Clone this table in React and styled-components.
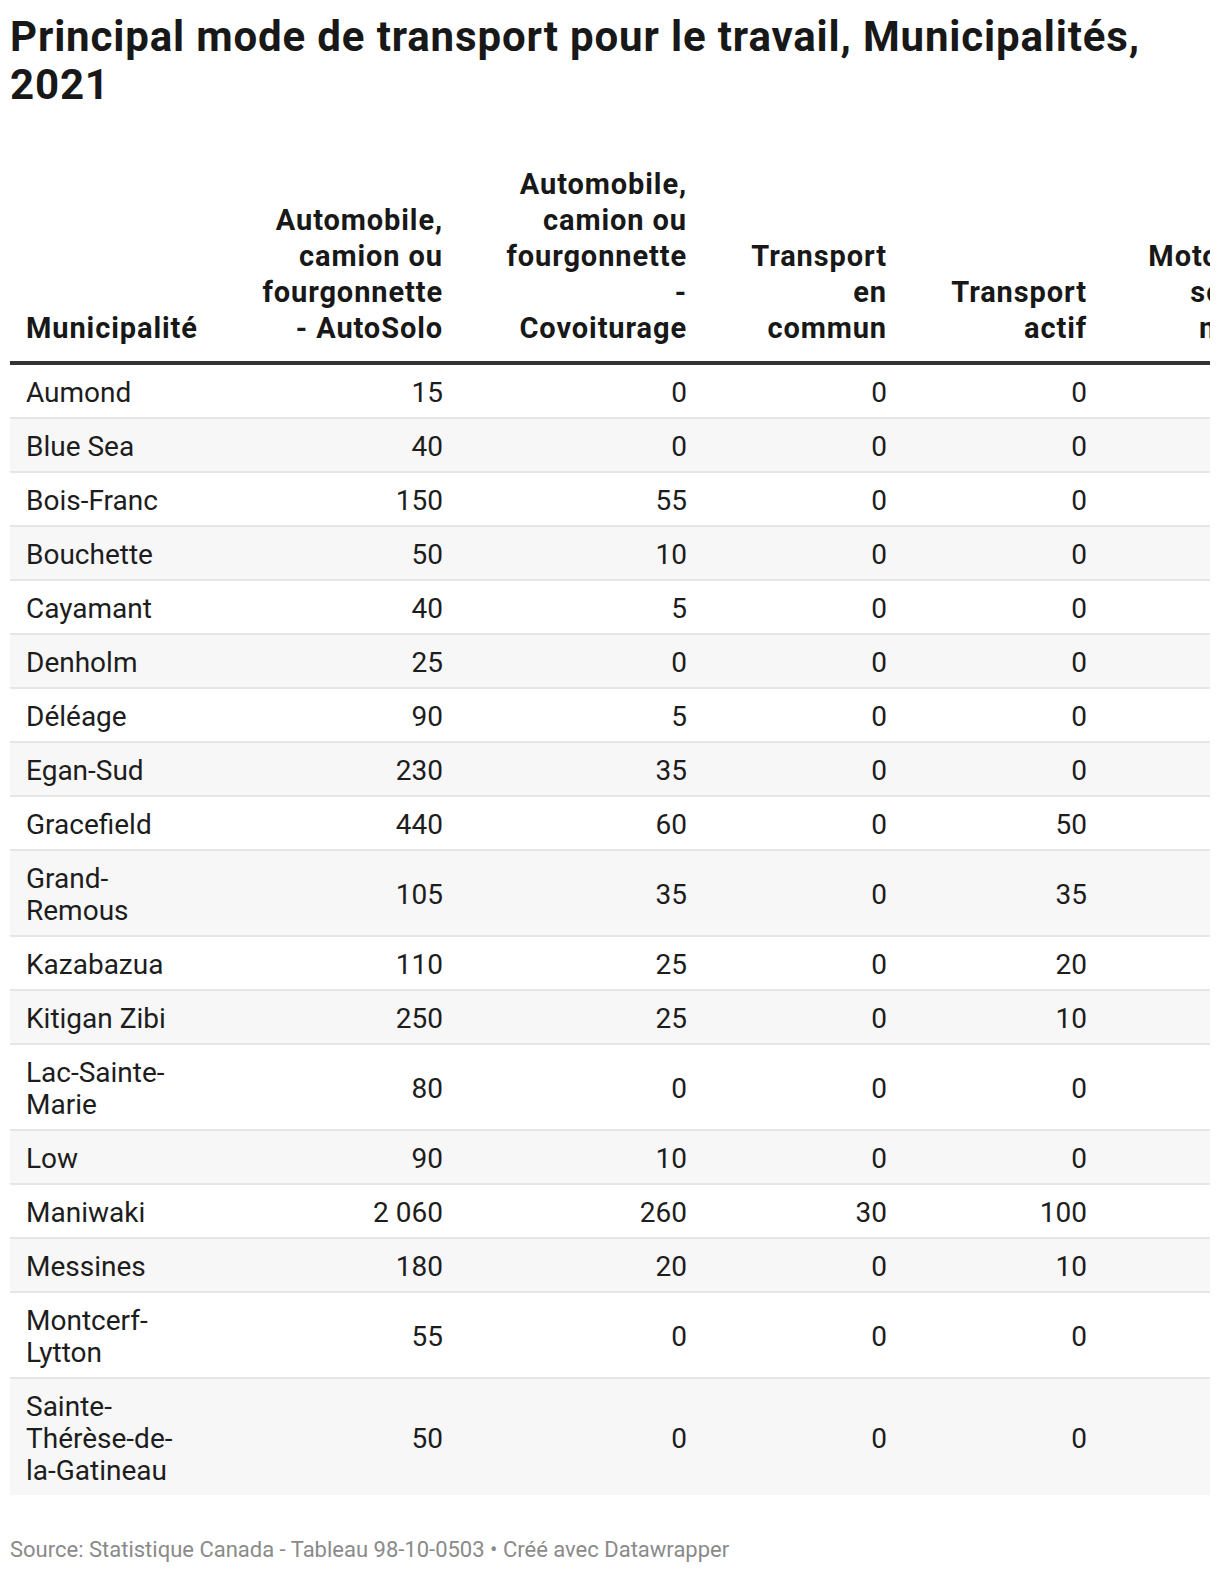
import styled, { createGlobalStyle } from "styled-components";

const GlobalStyle = createGlobalStyle`
    html, body {
        margin: 0;
        padding: 0;
        background: #ffffff;
    }

    body {
        font-family: Roboto, "Liberation Sans", Arial, sans-serif;
        color: #1d1d1d;
    }
`;

const columns = [
    { label: "Municipalité", width: 207, align: "left" },
    { label: "Automobile,\ncamion ou\nfourgonnette\n- AutoSolo", width: 242, align: "right" },
    { label: "Automobile,\ncamion ou\nfourgonnette\n-\nCovoiturage", width: 244, align: "right" },
    { label: "Transport\nen\ncommun", width: 200, align: "right" },
    { label: "Transport\nactif", width: 200, align: "right" },
    { label: "Motocyclette,\nscooter ou\nmobylette", width: 251, align: "right" }
];

const rows = [
    ["Aumond", "15", "0", "0", "0", "0"],
    ["Blue Sea", "40", "0", "0", "0", "0"],
    ["Bois-Franc", "150", "55", "0", "0", "0"],
    ["Bouchette", "50", "10", "0", "0", "0"],
    ["Cayamant", "40", "5", "0", "0", "0"],
    ["Denholm", "25", "0", "0", "0", "0"],
    ["Déléage", "90", "5", "0", "0", "0"],
    ["Egan-Sud", "230", "35", "0", "0", "0"],
    ["Gracefield", "440", "60", "0", "50", "0"],
    ["Grand-\nRemous", "105", "35", "0", "35", "0"],
    ["Kazabazua", "110", "25", "0", "20", "0"],
    ["Kitigan Zibi", "250", "25", "0", "10", "0"],
    ["Lac-Sainte-\nMarie", "80", "0", "0", "0", "0"],
    ["Low", "90", "10", "0", "0", "0"],
    ["Maniwaki", "2 060", "260", "30", "100", "0"],
    ["Messines", "180", "20", "0", "10", "0"],
    ["Montcerf-\nLytton", "55", "0", "0", "0", "0"],
    ["Sainte-\nThérèse-de-\nla-Gatineau", "50", "0", "0", "0", "0"]
];

export default function App() {
    const tableWidth = columns.reduce((sum, c) => sum + c.width, 0);

    return (
        <Page>
            <GlobalStyle />
            <Title>Principal mode de transport pour le travail, Municipalités, 2021</Title>
            <TableWrap>
                <Table style={{ width: tableWidth }}>
                    <colgroup>
                        {columns.map((c, i) => (
                            <col key={i} style={{ width: c.width }} />
                        ))}
                    </colgroup>
                    <thead>
                        <tr>
                            {columns.map((c, i) => (
                                <HeadCell key={i} $align={c.align}>
                                    {c.label}
                                </HeadCell>
                            ))}
                        </tr>
                    </thead>
                    <tbody>
                        {rows.map((row, r) => (
                            <Row key={r} $striped={r % 2 === 1} $last={r === rows.length - 1}>
                                {row.map((value, i) => (
                                    <Cell key={i} $align={columns[i].align}>
                                        {value}
                                    </Cell>
                                ))}
                            </Row>
                        ))}
                    </tbody>
                </Table>
            </TableWrap>
            <Footer>Source: Statistique Canada - Tableau 98-10-0503 • Créé avec Datawrapper</Footer>
        </Page>
    );
}

const Page = styled.div`
    padding: 13px 10px 0;
    width: 1220px;
    box-sizing: border-box;
`;

const Title = styled.h1`
    margin: 0 0 45px;
    max-width: 1160px;
    font-size: 42px;
    line-height: 48px;
    font-weight: 700;
    letter-spacing: 0.85px;
    color: #181818;
`;

const TableWrap = styled.div`
    width: 1200px;
    overflow: hidden;
`;

const Table = styled.table`
    table-layout: fixed;
    border-collapse: collapse;
    border-spacing: 0;
`;

const HeadCell = styled.th`
    text-align: ${(p) => p.$align};
    vertical-align: bottom;
    white-space: pre-line;
    padding: 12px 16px 15px;
    font-size: 29px;
    line-height: 36px;
    font-weight: 700;
    letter-spacing: 0.9px;
    color: #181818;
    border-bottom: 4px solid #333333;
`;

const Row = styled.tr`
    background: ${(p) => (p.$striped ? "#f7f7f7" : "#ffffff")};
    border-bottom: ${(p) => (p.$last ? "none" : "2px solid #e6e6e6")};
`;

const Cell = styled.td`
    text-align: ${(p) => p.$align};
    vertical-align: middle;
    white-space: pre-line;
    padding: 12px 16px 8px;
    font-size: 28px;
    line-height: 32px;
    color: #1d1d1d;
`;

const Footer = styled.div`
    margin-top: 41px;
    font-size: 22px;
    line-height: 28px;
    color: #8a8a8a;
`;
